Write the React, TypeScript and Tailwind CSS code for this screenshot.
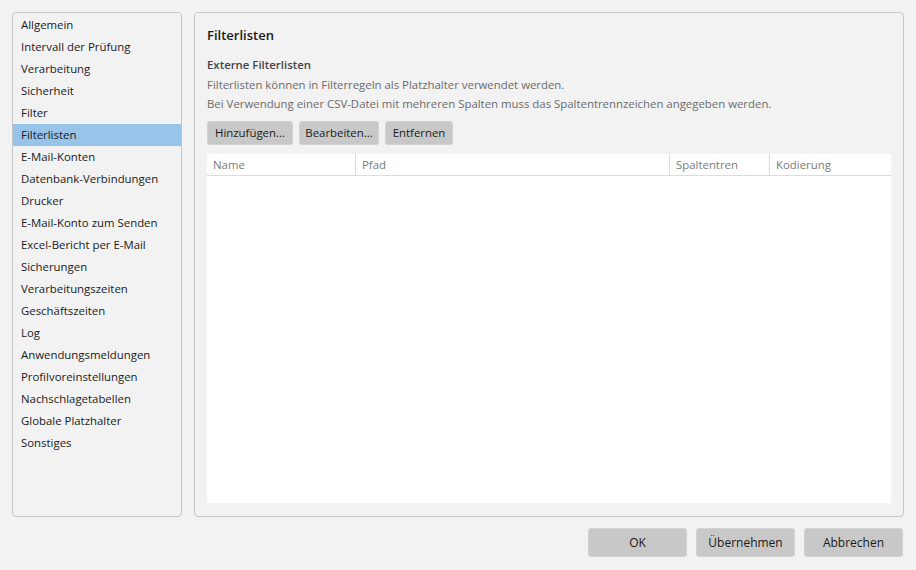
import React, { useState } from 'react';

const sections = [
  'Allgemein',
  'Intervall der Prüfung',
  'Verarbeitung',
  'Sicherheit',
  'Filter',
  'Filterlisten',
  'E-Mail-Konten',
  'Datenbank-Verbindungen',
  'Drucker',
  'E-Mail-Konto zum Senden',
  'Excel-Bericht per E-Mail',
  'Sicherungen',
  'Verarbeitungszeiten',
  'Geschäftszeiten',
  'Log',
  'Anwendungsmeldungen',
  'Profilvoreinstellungen',
  'Nachschlagetabellen',
  'Globale Platzhalter',
  'Sonstiges',
];

const columns = [
  { name: 'Name', width: 'w-[149px]' },
  { name: 'Pfad', width: 'w-[314px]' },
  { name: 'Spaltentren', width: 'w-[100px]' },
  { name: 'Kodierung', width: 'flex-1' },
];

function App() {
  const [selected, setSelected] = useState('Filterlisten');

  return (
    <div className="w-[916px] h-[570px] bg-[#f2f2f2] flex flex-col text-[11.4px] text-[#1a1a1a] font-['Open_Sans','Noto_Sans',sans-serif]">
      <div className="flex gap-3 px-3 pt-3 h-[517px]">
        <div className="w-[170px] border border-[#c6c6c6] rounded-[4px] pt-[1px]">
          {sections.map((s) => (
            <div
              key={s}
              onClick={() => setSelected(s)}
              className={
                'h-[22px] flex items-center pl-[8px] whitespace-nowrap ' +
                (s === selected ? 'bg-[#99c4e9]' : '')
              }
            >
              {s}
            </div>
          ))}
        </div>

        <div className="flex-1 border border-[#c6c6c6] rounded-[4px] px-3 pt-[13px] pb-[13px] flex flex-col">
          <div className="font-semibold text-[13px] h-[18px] leading-[18px]">Filterlisten</div>
          <div className="mt-[12px] font-semibold text-[#444] h-[18px] leading-[18px]">Externe Filterlisten</div>
          <div className="text-[#6b6b6b] h-[19px] leading-[19px] mt-[1px]">
            Filterlisten können in Filterregeln als Platzhalter verwendet werden.
          </div>
          <div className="text-[#6b6b6b] h-[19px] leading-[19px]">
            Bei Verwendung einer CSV-Datei mit mehreren Spalten muss das Spaltentrennzeichen angegeben werden.
          </div>
          <div className="flex gap-[6px] mt-[8px]">
            <button className="h-[24px] w-[86px] bg-[#c8c8c8] border border-[#d2d2d2] rounded-[3px]">Hinzufügen...</button>
            <button className="h-[24px] w-[80px] bg-[#c8c8c8] border border-[#d2d2d2] rounded-[3px]">Bearbeiten...</button>
            <button className="h-[24px] w-[68px] bg-[#c8c8c8] border border-[#d2d2d2] rounded-[3px]">Entfernen</button>
          </div>
          <div className="mt-[9px] flex-1 bg-white flex flex-col">
            <div className="flex h-[22px] border-b border-[#dcdcdc] text-[#7a7a7a]">
              {columns.map((c, i) => (
                <div
                  key={c.name}
                  className={
                    c.width +
                    ' flex items-center pl-[6px] ' +
                    (i < columns.length - 1 ? 'border-r border-[#dcdcdc]' : '')
                  }
                >
                  {c.name}
                </div>
              ))}
            </div>
          </div>
        </div>
      </div>

      <div className="flex justify-end gap-[9px] pr-[13px] mt-[11px] text-[12px]">
        <button className="h-[29px] w-[99px] bg-[#c8c8c8] border border-[#d2d2d2] rounded-[3px]">OK</button>
        <button className="h-[29px] w-[99px] bg-[#c8c8c8] border border-[#d2d2d2] rounded-[3px]">Übernehmen</button>
        <button className="h-[29px] w-[99px] bg-[#c8c8c8] border border-[#d2d2d2] rounded-[3px]">Abbrechen</button>
      </div>
    </div>
  );
}

export default App;
